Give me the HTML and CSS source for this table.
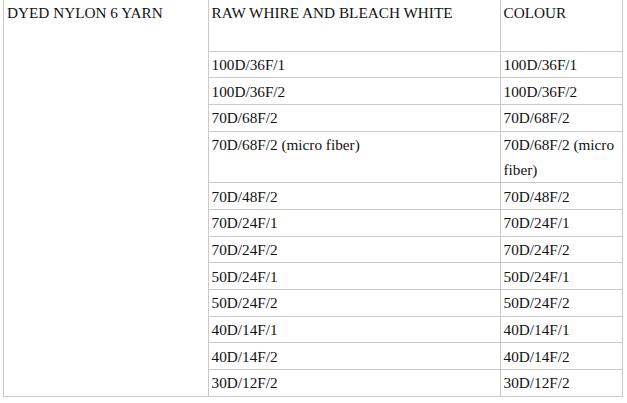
FILE: index.html
```html
<!DOCTYPE html>
<html>
<head>
<meta charset="utf-8">
<link rel="stylesheet" href="styles.css">
</head>
<body>
<table class="spec">
  <colgroup>
    <col class="c1">
    <col class="c2">
    <col class="c3">
  </colgroup>
  <tr class="head">
    <td rowspan="13" class="title">DYED NYLON 6 YARN</td>
    <td>RAW WHIRE AND BLEACH WHITE</td>
    <td>COLOUR</td>
  </tr>
  <tr><td>100D/36F/1</td><td>100D/36F/1</td></tr>
  <tr><td>100D/36F/2</td><td>100D/36F/2</td></tr>
  <tr><td>70D/68F/2</td><td>70D/68F/2</td></tr>
  <tr><td>70D/68F/2 (micro fiber)</td><td>70D/68F/2 (micro fiber)</td></tr>
  <tr><td>70D/48F/2</td><td>70D/48F/2</td></tr>
  <tr><td>70D/24F/1</td><td>70D/24F/1</td></tr>
  <tr><td>70D/24F/2</td><td>70D/24F/2</td></tr>
  <tr><td>50D/24F/1</td><td>50D/24F/1</td></tr>
  <tr><td>50D/24F/2</td><td>50D/24F/2</td></tr>
  <tr><td>40D/14F/1</td><td>40D/14F/1</td></tr>
  <tr><td>40D/14F/2</td><td>40D/14F/2</td></tr>
  <tr><td>30D/12F/2</td><td>30D/12F/2</td></tr>
</table>
</body>
</html>
```
FILE: styles.css
```css
html, body {
  margin: 0;
  padding: 0;
  background: #ffffff;
}

.spec {
  margin: -1px 0 0 3px;
  width: 619px;
  table-layout: fixed;
  border-collapse: collapse;
  font-family: "Liberation Serif", "Times New Roman", serif;
  font-size: 15.25px;
  line-height: 25px;
  color: #111111;
}

.c1 { width: 205px; }
.c2 { width: 292px; }
.c3 { width: 122px; }

.spec td {
  border: 1px solid #c9c9c9;
  padding: 0.33px 2px 0.33px 2.5px;
  vertical-align: top;
  text-align: left;
}

.spec .title {
  padding-left: 3px;
}

.spec .head td {
  height: 50px;
}
```
